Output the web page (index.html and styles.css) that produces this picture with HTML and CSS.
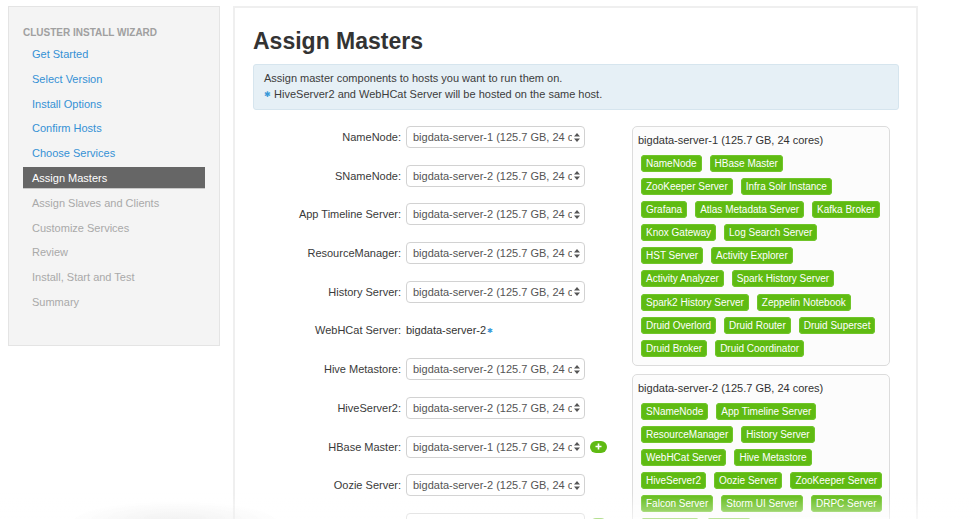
FILE: index.html
```html
<!DOCTYPE html>
<html>
<head>
<meta charset="utf-8">
<link rel="stylesheet" href="styles.css">
</head>
<body>
<div class="page">
  <aside class="wizard">
    <div class="wizard-title">CLUSTER INSTALL WIZARD</div>
    <ul class="steps">
      <li class="done">Get Started</li>
      <li class="done">Select Version</li>
      <li class="done">Install Options</li>
      <li class="done">Confirm Hosts</li>
      <li class="done">Choose Services</li>
      <li class="active">Assign Masters</li>
      <li class="todo">Assign Slaves and Clients</li>
      <li class="todo">Customize Services</li>
      <li class="todo">Review</li>
      <li class="todo">Install, Start and Test</li>
      <li class="todo">Summary</li>
    </ul>
  </aside>

  <main class="panel">
    <h2 class="title">Assign Masters</h2>
    <div class="alert">
      <div>Assign master components to hosts you want to run them on.</div>
      <div><span class="star">✱</span> HiveServer2 and WebHCat Server will be hosted on the same host.</div>
    </div>

    <div class="assign">
      <div class="form">
        <div class="row"><span class="lbl">NameNode:</span><div class="sel"><span class="sel-text">bigdata-server-1 (125.7 GB, 24 cores)</span><svg class="caret" width="6" height="9" viewBox="0 0 6 9"><path d="M0 3.5L3 0L6 3.5Z M0 5.5L3 9L6 5.5Z" fill="#555"/></svg></div></div>
        <div class="row"><span class="lbl">SNameNode:</span><div class="sel"><span class="sel-text">bigdata-server-2 (125.7 GB, 24 cores)</span><svg class="caret" width="6" height="9" viewBox="0 0 6 9"><path d="M0 3.5L3 0L6 3.5Z M0 5.5L3 9L6 5.5Z" fill="#555"/></svg></div></div>
        <div class="row"><span class="lbl">App Timeline Server:</span><div class="sel"><span class="sel-text">bigdata-server-2 (125.7 GB, 24 cores)</span><svg class="caret" width="6" height="9" viewBox="0 0 6 9"><path d="M0 3.5L3 0L6 3.5Z M0 5.5L3 9L6 5.5Z" fill="#555"/></svg></div></div>
        <div class="row"><span class="lbl">ResourceManager:</span><div class="sel"><span class="sel-text">bigdata-server-2 (125.7 GB, 24 cores)</span><svg class="caret" width="6" height="9" viewBox="0 0 6 9"><path d="M0 3.5L3 0L6 3.5Z M0 5.5L3 9L6 5.5Z" fill="#555"/></svg></div></div>
        <div class="row"><span class="lbl">History Server:</span><div class="sel"><span class="sel-text">bigdata-server-2 (125.7 GB, 24 cores)</span><svg class="caret" width="6" height="9" viewBox="0 0 6 9"><path d="M0 3.5L3 0L6 3.5Z M0 5.5L3 9L6 5.5Z" fill="#555"/></svg></div></div>
        <div class="row"><span class="lbl">WebHCat Server:</span><span class="static">bigdata-server-2<span class="star small">✱</span></span></div>
        <div class="row"><span class="lbl">Hive Metastore:</span><div class="sel"><span class="sel-text">bigdata-server-2 (125.7 GB, 24 cores)</span><svg class="caret" width="6" height="9" viewBox="0 0 6 9"><path d="M0 3.5L3 0L6 3.5Z M0 5.5L3 9L6 5.5Z" fill="#555"/></svg></div></div>
        <div class="row"><span class="lbl">HiveServer2:</span><div class="sel"><span class="sel-text">bigdata-server-2 (125.7 GB, 24 cores)</span><svg class="caret" width="6" height="9" viewBox="0 0 6 9"><path d="M0 3.5L3 0L6 3.5Z M0 5.5L3 9L6 5.5Z" fill="#555"/></svg></div></div>
        <div class="row"><span class="lbl">HBase Master:</span><div class="sel"><span class="sel-text">bigdata-server-1 (125.7 GB, 24 cores)</span><svg class="caret" width="6" height="9" viewBox="0 0 6 9"><path d="M0 3.5L3 0L6 3.5Z M0 5.5L3 9L6 5.5Z" fill="#555"/></svg></div><span class="plus"><svg width="7" height="7" viewBox="0 0 7 7"><path d="M3.5 0.5V6.5M0.5 3.5H6.5" stroke="#fff" stroke-width="1.6"/></svg></span></div>
        <div class="row"><span class="lbl">Oozie Server:</span><div class="sel"><span class="sel-text">bigdata-server-2 (125.7 GB, 24 cores)</span><svg class="caret" width="6" height="9" viewBox="0 0 6 9"><path d="M0 3.5L3 0L6 3.5Z M0 5.5L3 9L6 5.5Z" fill="#555"/></svg></div></div>
        <div class="row"><span class="lbl">ZooKeeper Server:</span><div class="sel"><span class="sel-text">bigdata-server-1 (125.7 GB, 24 cores)</span><svg class="caret" width="6" height="9" viewBox="0 0 6 9"><path d="M0 3.5L3 0L6 3.5Z M0 5.5L3 9L6 5.5Z" fill="#555"/></svg></div><span class="plus"><svg width="7" height="7" viewBox="0 0 7 7"><path d="M3.5 0.5V6.5M0.5 3.5H6.5" stroke="#fff" stroke-width="1.6"/></svg></span></div>
      </div>

      <div class="hosts">
        <div class="host">
          <div class="host-title">bigdata-server-1 (125.7 GB, 24 cores)</div>
          <div class="badges">
            <div class="brow"><span class="badge">NameNode</span><span class="badge">HBase Master</span></div>
            <div class="brow"><span class="badge">ZooKeeper Server</span><span class="badge">Infra Solr Instance</span></div>
            <div class="brow"><span class="badge">Grafana</span><span class="badge">Atlas Metadata Server</span><span class="badge">Kafka Broker</span></div>
            <div class="brow"><span class="badge">Knox Gateway</span><span class="badge">Log Search Server</span></div>
            <div class="brow"><span class="badge">HST Server</span><span class="badge">Activity Explorer</span></div>
            <div class="brow"><span class="badge">Activity Analyzer</span><span class="badge">Spark History Server</span></div>
            <div class="brow"><span class="badge">Spark2 History Server</span><span class="badge">Zeppelin Notebook</span></div>
            <div class="brow"><span class="badge">Druid Overlord</span><span class="badge">Druid Router</span><span class="badge">Druid Superset</span></div>
            <div class="brow"><span class="badge">Druid Broker</span><span class="badge">Druid Coordinator</span></div>
          </div>
        </div>
        <div class="host">
          <div class="host-title">bigdata-server-2 (125.7 GB, 24 cores)</div>
          <div class="badges">
            <div class="brow"><span class="badge">SNameNode</span><span class="badge">App Timeline Server</span></div>
            <div class="brow"><span class="badge">ResourceManager</span><span class="badge">History Server</span></div>
            <div class="brow"><span class="badge">WebHCat Server</span><span class="badge">Hive Metastore</span></div>
            <div class="brow"><span class="badge">HiveServer2</span><span class="badge">Oozie Server</span><span class="badge">ZooKeeper Server</span></div>
            <div class="brow"><span class="badge">Falcon Server</span><span class="badge">Storm UI Server</span><span class="badge">DRPC Server</span></div>
            <div class="brow"><span class="badge">Supervisor</span><span class="badge">Nimbus</span></div>
          </div>
        </div>
      </div>
    </div>
  </main>
</div>
<div class="fade"></div>
</body>
</html>
```

FILE: styles.css
```css
html, body {
  margin: 0;
  padding: 0;
  background: #fff;
  height: 100%;
  overflow: hidden;
}

body {
  font-family: "Liberation Sans", Arial, sans-serif;
  font-size: 11px;
  color: #333;
}

.page {
  display: flex;
  align-items: flex-start;
  gap: 13px;
  padding: 6px 0 0 8px;
  height: 100vh;
  box-sizing: border-box;
}

/* Sidebar */
.wizard {
  width: 212px;
  height: 340px;
  box-sizing: border-box;
  background: #f4f4f4;
  border: 1px solid #e4e4e4;
  padding: 20px 14px 0 14px;
}

.wizard-title {
  font-size: 10px;
  font-weight: bold;
  color: #a0a0a0;
  line-height: 12px;
  margin-bottom: 4px;
}

.steps {
  list-style: none;
  margin: 0;
  padding: 0;
}

.steps li {
  height: 22px;
  line-height: 22px;
  margin-bottom: 2.8px;
  padding-left: 9px;
  font-size: 11px;
  white-space: nowrap;
}

.steps .done { color: #3591d5; }
.steps .todo { color: #a9a9a9; }
.steps .active {
  background: #666;
  color: #fff;
  border-bottom: 1px solid #c8c8c8;
  box-sizing: border-box;
}

/* Main panel */
.panel {
  width: 685px;
  align-self: stretch;
  box-sizing: border-box;
  border: 2px solid #efefef;
  border-bottom: none;
  padding: 0 17px 0 18px;
  background: #fff;
}

.title {
  margin: 20px 0 10px 0;
  font-size: 23px;
  line-height: 26px;
  font-weight: bold;
  color: #333;
}

.alert {
  background: #e6f0f6;
  border: 1px solid #d6e5ee;
  border-radius: 3px;
  padding: 5px 10px 6px 10px;
  line-height: 16px;
  color: #3c3c3c;
}

.star {
  color: #3a9ad9;
  font-size: 8px;
  vertical-align: 1px;
}

.star.small {
  font-size: 7px;
  margin-left: 1px;
}

.assign {
  display: flex;
  margin-top: 16px;
}

/* Form */
.form {
  width: 379px;
  flex: none;
}

.row {
  display: flex;
  align-items: center;
  height: 22px;
  margin-bottom: 16.7px;
}

.lbl {
  width: 148px;
  text-align: right;
  margin-right: 5px;
  color: #3a3a3a;
  white-space: nowrap;
}

.sel {
  width: 179px;
  height: 22px;
  box-sizing: border-box;
  border: 1px solid #d2d2d2;
  border-radius: 4px;
  background: #fff;
  display: flex;
  align-items: center;
  padding: 0 4px 0 6px;
}

.sel-text {
  flex: 1;
  overflow: hidden;
  white-space: nowrap;
  color: #555;
}

.caret {
  flex: none;
  margin-left: 2px;
}

.static {
  color: #333;
}

.plus {
  width: 17px;
  height: 12px;
  border-radius: 6px;
  background: #5fba13;
  margin-left: 5px;
  display: flex;
  align-items: center;
  justify-content: center;
}

.plus svg { display: block; }

/* Hosts */
.hosts {
  width: 258px;
  flex: none;
  display: flex;
  flex-direction: column;
  gap: 8px;
}

.host {
  border: 1px solid #dcdcdc;
  border-radius: 5px;
  background: #fcfcfc;
  padding: 6px 8px 8px 8px;
}

.host-title {
  line-height: 14px;
  color: #333;
  margin-left: -3px;
  margin-bottom: 8px;
  white-space: nowrap;
}

.badges {
  display: flex;
  flex-direction: column;
  gap: 6.1px;
}

.brow {
  display: flex;
  gap: 8px;
  white-space: nowrap;
}

.badge {
  height: 17px;
  line-height: 17px;
  padding: 0 5px;
  border-radius: 4px;
  background: #5fbb12;
  color: #fff;
  font-size: 10px;
  box-shadow: 0 0 0 1px #70c52a inset;
}

/* bottom fade of the screenshot */
.fade {
  position: fixed;
  left: 0;
  right: 0;
  bottom: 0;
  height: 26px;
  pointer-events: none;
  background:
    radial-gradient(ellipse 110px 22px at 175px 30px, rgba(0,0,0,0.06), rgba(0,0,0,0)),
    linear-gradient(to bottom, rgba(255,255,255,0), rgba(255,255,255,0.55));
}
```
